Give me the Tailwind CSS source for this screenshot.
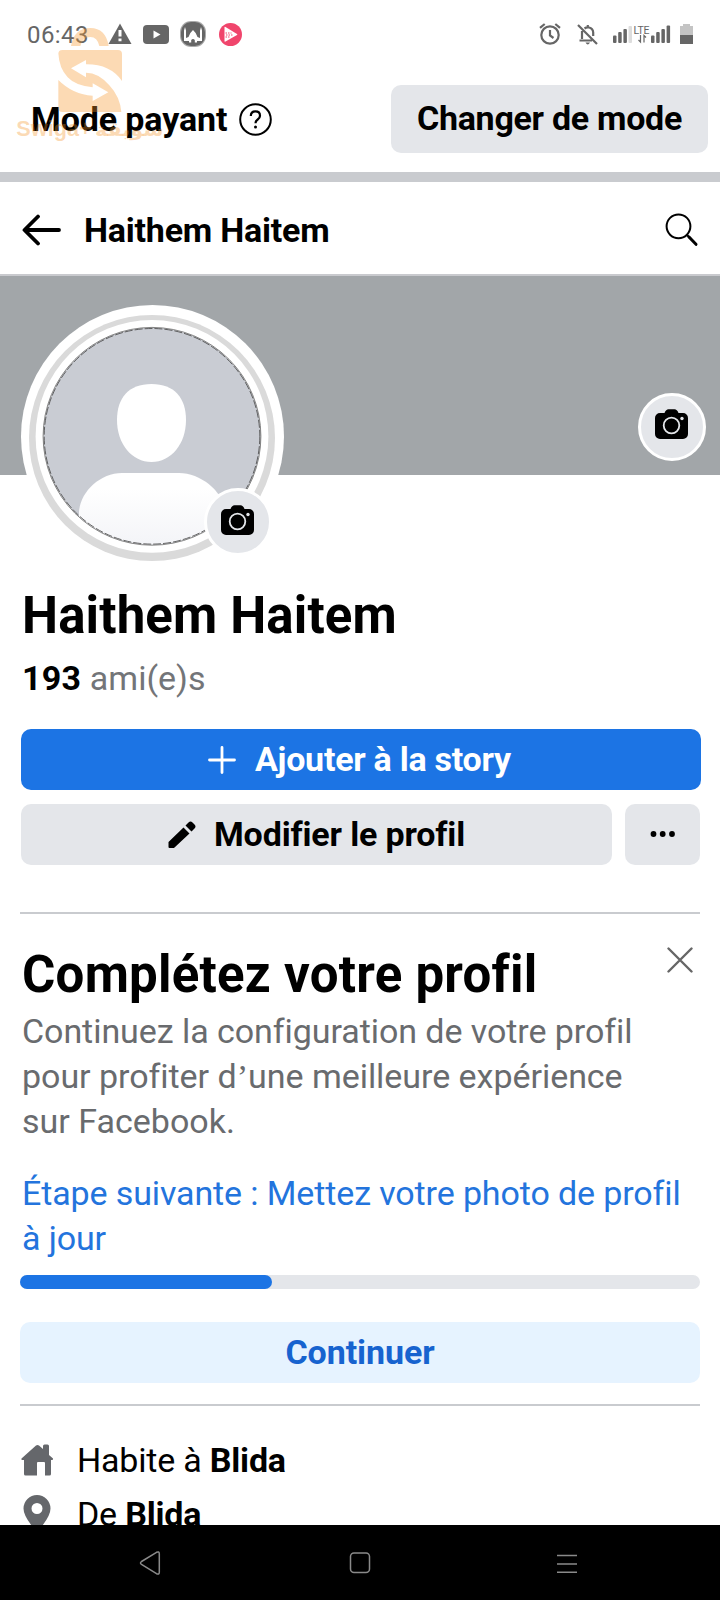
<!DOCTYPE html>
<html lang="fr">
<head>
<meta charset="utf-8">
<title>Haithem Haitem</title>
<script src="https://cdn.jsdelivr.net/npm/@tailwindcss/browser@4"></script>
</head>
<body class="relative w-[720px] h-[1600px] overflow-hidden bg-white text-black font-['Roboto',sans-serif] text-[34px] whitespace-nowrap [font-variant-ligatures:none]">
<svg class="hidden">
  <symbol id="camera" viewBox="0 0 33 30">
    <path d="M5 4h4.500Q11 0.300 13.500 0.300h6Q22 0.300 23.500 4H28a5 5 0 0 1 5 5v16a5 5 0 0 1-5 5H5a5 5 0 0 1-5-5V9a5 5 0 0 1 5-5z"/>
    <circle cx="16.500" cy="16.500" r="7.800" fill="none" stroke="#e4e6ea" stroke-width="1.800"/>
    <circle cx="27" cy="9.500" r="1.700" fill="#e4e6ea"/>
  </symbol>
</svg>
<div class="flex flex-col h-[1525px] overflow-hidden">
  <header class="flex items-center h-[68px] shrink-0 pl-[27px] pr-[27px] text-[#666]">
    <span class="w-[81px] pt-[2px] text-[24px] leading-none tracking-[0.4px]">06:43</span>
    <svg class="w-[24px] h-[22px]" viewBox="0 0 24 22"><path fill="#666" d="M12 0.500 23.500 21H0.500z"/><path stroke="#fff" stroke-width="3" d="M12 7v6.500M12 15.500v2.700"/></svg>
    <svg class="w-[26px] h-[19px] ml-[11px]" viewBox="0 0 26 19"><rect width="26" height="19" rx="4" fill="#666"/><path fill="#fff" d="m10.500 5.500 7 4-7 4z"/></svg>
    <svg class="w-[26px] h-[26px] ml-[11px]" viewBox="0 0 26 26"><rect width="26" height="26" rx="11" fill="#aaa"/><rect x="1" y="1" width="24" height="24" rx="10" fill="#666"/><path fill="#fff" d="M4 20V9.500L5 6l1 3.500V17l2.500-1q1-4 4.500-7 3.500 3 4.500 7l2.500 1V9.500L21 6l1 3.500V20h-5v1.500h-2.200V19q-1.800-2-3.600 0v2.500H9V20z"/></svg>
    <svg class="w-[23px] h-[23px] ml-[13px]" viewBox="0 0 23 23"><circle cx="11.500" cy="11.500" r="11.500" fill="#f0456c"/><path fill="#fff" d="M5.500 4.500q0-1 1-.5l11.500 7q.7.500 0 1l-11.500 6.500q-1 .5-1-.5z"/><path stroke="#f0456c" stroke-width="1" stroke-dasharray="1.500 1" d="M6.500 10h6M7 12h7M6.500 14h5"/></svg>
    <svg class="w-[22px] h-[22px] ml-[297px]" viewBox="0 0 22 22" fill="none" stroke="#666" stroke-width="2.200"><circle cx="11" cy="12" r="8.700"/><path d="M11 7v5.500l3.500 2.500M1 4.800 5.700 1M21 4.800 16.300 1"/></svg>
    <svg class="w-[21px] h-[21px] ml-[16px]" viewBox="0 0 21 21" fill="none" stroke="#666" stroke-width="2.200"><path d="M1 1 20 20M5 7v8M2.500 16.500H15M7.500 4.500Q9.500 3 12 3.500q4 1 4.200 5V12M10.800 1v3"/><path fill="#666" stroke="none" d="M8.500 18.500h4.500q-2.200 4-4.500 0z"/></svg>
    <svg class="w-[58px] h-[20px] ml-[15px]" viewBox="0 0 58 20"><g fill="#666"><rect y="11.500" width="3.500" height="7.500" rx="1"/><rect x="5.200" y="8" width="3.500" height="11" rx="1"/><rect x="10.400" y="5" width="3.500" height="14" rx="1"/><rect x="15.500" y="2" width="3.500" height="17" rx="1" fill="#ddd"/><rect x="38" y="11.500" width="3.500" height="7.500" rx="1"/><rect x="43.200" y="8" width="3.500" height="11" rx="1"/><rect x="48.400" y="5" width="3.500" height="14" rx="1"/><rect x="53.600" y="1.500" width="3.500" height="17.500" rx="1"/></g><text x="20.500" y="9.500" font-size="10.500" textLength="16" fill="#666">LTE</text><path stroke="#666" stroke-width="1.200" fill="none" d="M27.500 11v7l-2-2M31 18.500v-7l2 2"/></svg>
    <svg class="w-[13px] h-[20px] ml-[9px]" viewBox="0 0 13 20"><path fill="#c4c4c4" d="M3 2V0h7v2h3v10H0V2z"/><path fill="#666" d="M0 11h13v9H0z"/></svg>
  </header>
  <div class="flex h-[104px] shrink-0 pt-[17px] pl-[31px] pr-[12px] items-start justify-between">
    <div class="flex items-center h-[68px]">
      <span class="w-[208px] font-bold tracking-[-0.12px]">Mode payant</span>
      <svg class="w-[33px] h-[33px]" viewBox="0 0 33 33" fill="none" stroke="#000" stroke-width="2"><circle cx="16.500" cy="16.500" r="15.300"/><path stroke-width="2.200" d="M11.800 13q0-4.600 4.600-4.600t4.600 4.300q0 2.200-2.300 3.800-2.200 1.500-2.200 3.800"/><circle cx="16.500" cy="24" r="1.500" fill="#000" stroke="none"/></svg>
    </div>
    <div class="flex items-center justify-center w-[317px] h-[68px] pb-px rounded-[10px] bg-[#e4e6ea] font-bold tracking-[-0.29px]">Changer de mode</div>
  </div>
  <div class="h-[10px] shrink-0 bg-[#c9cbcf]"></div>
  <nav class="flex items-center h-[94px] shrink-0 border-b-2 border-[#c9cace] pl-[22px] pr-[21px]">
    <svg class="w-[40px] h-[32px] mt-1" viewBox="0 0 40 32" fill="none" stroke="#000" stroke-width="3.800" stroke-linecap="round" stroke-linejoin="round"><path d="M16 2.500 2.500 16 16 29.500M3 16h34"/></svg>
    <span class="ml-[22px] pt-[5px] font-bold tracking-[-0.22px]">Haithem Haitem</span>
    <svg class="w-[34px] h-[34px] ml-auto mt-1" viewBox="0 0 34 34" fill="none" stroke="#000"><circle cx="13.500" cy="13.300" r="11.900" stroke-width="2"/><path stroke-width="2.300" d="m21.500 21.500 4 4"/><path stroke-width="3" stroke-linecap="round" d="m24 24 7 7.300"/></svg>
  </nav>
  <section class="relative h-[289px] shrink-0">
    <div class="h-[199px] bg-[#a2a6a9]"></div>
    <svg class="absolute left-[20px] top-[28px] w-[266px] h-[260px]" viewBox="20 304 266 260">
      <defs>
        <clipPath id="face"><circle cx="152" cy="436.300" r="108.500"/></clipPath>
        <linearGradient id="body" x1="0" x2="0" y1="0" y2="1"><stop offset=".2" stop-color="#fff"/><stop offset="1" stop-color="#f2f3f7"/></linearGradient>
      </defs>
      <circle cx="152.500" cy="436.500" r="131.500" fill="#fff"/>
      <circle cx="152" cy="438" r="123" fill="#dadada"/>
      <circle cx="152" cy="436.400" r="116.400" fill="#fff"/>
      <circle cx="152" cy="436.300" r="108.500" fill="#c9ccd3"/>
      <g clip-path="url(#face)">
        <path fill="#fff" d="M151.500 384c23 0 34.500 14 34.500 36 0 24-15 42-34.500 42S117 444 117 420c0-22 11.500-36 34.500-36z"/>
        <path fill="url(#body)" d="M79 512C80 492 100 473 122 473h57c22 0 45 19 46 39v40H79z"/>
      </g>
      <circle cx="152" cy="436.300" r="108.900" fill="none" stroke="#666" stroke-width=".8"/>
      <circle cx="152" cy="436.300" r="107.800" fill="none" stroke="#444" stroke-width=".8" stroke-dasharray="8 2"/>
    </svg>
    <div class="absolute left-[204px] top-[212px] flex items-center justify-center size-[68px] rounded-full border-3 border-white bg-[#e4e6ea]"><svg class="w-[33px] h-[30px] -mt-1 mr-[2px]"><use href="#camera"/></svg></div>
    <div class="absolute left-[638px] top-[117px] flex items-center justify-center size-[68px] rounded-full border-3 border-white bg-[#e4e6ea]"><svg class="w-[33px] h-[30px] -mt-1.5 mr-[2px]"><use href="#camera"/></svg></div>
  </section>
  <main class="flex flex-col pl-[20px] pr-[20px]">
    <h1 class="mt-[25px] pl-[2px] text-[51px] leading-[51px] font-bold tracking-[0.15px]">Haithem Haitem</h1>
    <p class="mt-[17px] pl-[2px] leading-[40px] text-[#737578]"><span class="font-bold text-black tracking-[0.3px]">193</span> <span>ami(e)s</span></p>
    <div class="flex items-center mt-[31px] ml-[1px] -mr-[1px] h-[61px] rounded-[10px] bg-[#1c74e4] text-white font-bold tracking-[-0.26px]">
      <svg class="w-[28px] h-[28px] ml-[187px] mr-[19px]" viewBox="0 0 28 28"><path stroke="#fff" stroke-width="2.800" stroke-linecap="round" d="M14 1.500v25M1.500 14h25"/></svg><span>Ajouter à la story</span>
    </div>
    <div class="flex gap-[13px] mt-[14px] ml-[1px] font-bold">
      <div class="flex items-center w-[591px] h-[61px] rounded-[10px] bg-[#e4e6ea] tracking-[-0.15px]">
        <svg class="w-[28px] h-[28px] ml-[147px] mr-[18px]" viewBox="0 0 28 28"><path d="M0.500 21 15.500 6.500l6 6L6.500 26.500Q6 27 5 27H1.500Q.5 27 .5 26v-4zM17.500 4.500l3-3q2-2 4 0l2 2q2 2 0 4l-3 3z"/></svg><span>Modifier le profil</span>
      </div>
      <div class="flex items-center justify-center flex-1 h-[61px] pb-px rounded-[10px] bg-[#e4e6ea]"><svg class="w-[26px] h-[6px]" viewBox="0 0 26 6"><circle cx="3.500" cy="3" r="2.900"/><circle cx="12.700" cy="3" r="2.900"/><circle cx="22" cy="3" r="2.900"/></svg></div>
    </div>
    <div class="mt-[47px] h-[2px] bg-[#c9cbcf]"></div>
    <div class="flex justify-between mt-[31px] pl-[2px]">
      <h2 class="text-[51px] leading-[60px] font-bold tracking-[0.25px]">Complétez votre profil</h2>
      <svg class="w-[26px] h-[26px] mt-[2px] mr-[7px]" viewBox="0 0 26 26"><path stroke="#666" stroke-width="2.400" stroke-linecap="round" d="m1.500 1.500 23 23M24.500 1.500l-23 23"/></svg>
    </div>
    <p class="mt-[4px] pl-[2px] leading-[45px] text-[#696b6e]"><span class="tracking-[-0.06px]">Continuez la configuration de votre profil</span><br><span class="tracking-[-0.04px]">pour profiter d<span class="leading-none tracking-[0.1px] font-['Liberation_Serif']">’</span>une meilleure expérience</span><br><span>sur Facebook.</span></p>
    <p class="mt-[27px] pl-[2px] leading-[45px] text-[#2374dd] tracking-[-0.12px]">Étape suivante : Mettez votre photo de profil<br>à jour</p>
    <div class="mt-[14px] h-[14px] rounded-full bg-[#e4e6ea]"><div class="h-full rounded-full bg-[#1c74e4]" style="width:37%"></div></div>
    <div class="flex items-center justify-center mt-[33px] h-[61px] rounded-[10px] bg-[#e6f3ff] text-[#1763cf] font-bold tracking-[-0.08px]">Continuer</div>
    <div class="mt-[21px] h-[2px] bg-[#c9cbcf]"></div>
    <div class="flex items-center mt-[27px] h-[54px]">
      <svg class="w-[34px] h-[32px] mr-[23px]" viewBox="0 0 34 32"><path fill="#65676b" d="M1.500 14.500 16 1.500q1.500-1 3 0L23 5V2q0-1.500 1.500-1.500h3Q29 .5 29 2v9l4 3.500q.5 1.500-2 1.500v14q0 1.500-1.500 1.500h-4.500V19q0-1-1-1h-6q-1 0-1 1v12.500H5.500Q4 31.500 4 30V16Q.5 16 1.500 14.500z"/></svg>
      <span class="tracking-[-0.2px]">Habite à <b class="font-bold">Blida</b></span>
    </div>
    <div class="flex items-center h-[54px]">
      <svg class="w-[28px] h-[38px] ml-[3px] mr-[26px]" viewBox="0 0 28 38"><path fill="#65676b" fill-rule="evenodd" d="M14 0a13.500 13.500 0 0 1 13.500 13.500Q27.500 22 14 37 .5 22 .5 13.500A13.500 13.500 0 0 1 14 0zm0 8a5.500 5.500 0 1 0 0 11 5.500 5.500 0 0 0 0-11z"/></svg>
      <span class="tracking-[-0.2px]">De <b class="font-bold">Blida</b></span>
    </div>
  </main>
</div>
<footer class="flex h-[75px] bg-black pl-[139px] pt-[26px]">
  <svg class="w-[22px] h-[24px]" viewBox="0 0 22 24" fill="none" stroke="#8a8a8a" stroke-width="1.500"><path d="M2.500 10.500 17.500 1.300q2.800-1.300 2.800 1.500v18.400q0 2.800-2.800 1.500L2.500 13.500q-2-1.500 0-3z"/></svg>
  <svg class="w-[22px] h-[22px] ml-[188px] mt-px" viewBox="0 0 22 22" fill="none" stroke="#8a8a8a" stroke-width="1.500"><rect x="1.500" y="1" width="19" height="19.500" rx="3.500"/></svg>
  <svg class="w-[20px] h-[20px] ml-[186px] mt-[2px]" viewBox="0 0 20 20"><path stroke="#8a8a8a" stroke-width="1.500" d="M0 2.500h20M0 11h20M0 19.200h20"/></svg>
</footer>
<!-- Swiga watermark -->
<svg class="absolute left-0 top-[20px] w-[180px] h-[130px]" viewBox="0 60 540 390">
  <g fill="#f59628" fill-opacity=".35">
    <path d="M213 138Q222 84 271 84q46 0 55 54h-28q-6-27-27-27-24 0-30 27z"/>
    <path d="M175 162q0-12 12-12h167q12 0 12 12v81Q330 192 258 193v-13l-45 25 45 27v-14q38 0 70 38 32 34 36 80H187q-12 0-12-12v-84q44 44 103 47v16l47-26-47-27v12q-52-5-75-30-26-28-28-73z"/>
    <text x="49" y="409" font-size="64" font-weight="700" font-family="Liberation Sans, sans-serif" textLength="226" lengthAdjust="spacingAndGlyphs">Swiga+</text>
    <text x="285" y="409" font-size="56" font-weight="700" textLength="206" lengthAdjust="spacingAndGlyphs" font-family="DejaVu Sans, sans-serif">سويقة</text>
  </g>
</svg>
</body>
</html>
